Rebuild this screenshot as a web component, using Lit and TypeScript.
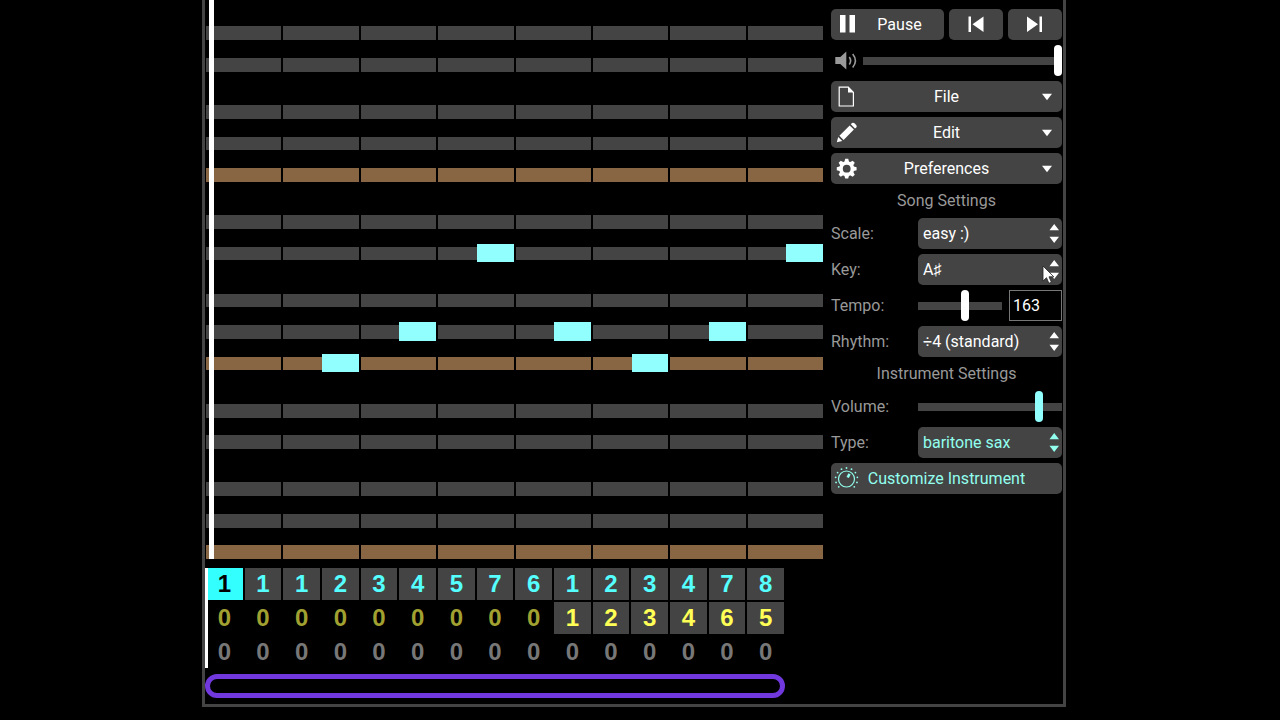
import { LitElement, html, css, svg } from "lit";
import { customElement, property } from "lit/decorators.js";
import { classMap } from "lit/directives/class-map.js";

const SEMITONES = 36;
const BEATS = 8;
const SCALE_STEPS = [0, 2, 4, 7, 9];

// Beats with a sounding off-beat note, keyed by semitone above the lowest row.
const NOTES: Record<number, number[]> = { 12: [1, 5], 14: [2, 4, 6], 19: [3, 7] };

const CHANNELS = [
  { name: "cyan", bars: [1, 1, 1, 2, 3, 4, 5, 7, 6, 1, 2, 3, 4, 7, 8] },
  { name: "yellow", bars: [0, 0, 0, 0, 0, 0, 0, 0, 0, 1, 2, 3, 4, 6, 5] },
  { name: "drum", bars: [0, 0, 0, 0, 0, 0, 0, 0, 0, 0, 0, 0, 0, 0, 0] },
];

@customElement("piano-roll")
export class PianoRoll extends LitElement {
  static styles = css`
    :host {
      display: flex;
      flex-direction: column;
      justify-content: flex-end;
      position: relative;
      height: 559px;
      overflow: hidden;
    }
    .rows {
      display: grid;
      grid-template-rows: repeat(36, 1fr);
      row-gap: 2px;
      height: 564px;
      flex: none;
      box-sizing: border-box;
      padding-left: 1px;
    }
    .row {
      display: grid;
      grid-template-columns: repeat(8, 1fr);
      column-gap: 2px;
      min-height: 0;
    }
    .beat {
      position: relative;
      background: #444;
    }
    .tonic .beat {
      background: #886644;
    }
    .note {
      position: absolute;
      top: -3px;
      bottom: -2px;
      left: 50%;
      right: 0;
      margin-left: 1px;
      background: #92ffff;
    }
    .playhead {
      position: absolute;
      top: 0;
      bottom: 0;
      left: 4px;
      width: 5px;
      background: #fff;
    }
  `;

  render() {
    const pitches = Array.from({ length: SEMITONES }, (_, i) => SEMITONES - 1 - i);
    const beats = Array.from({ length: BEATS }, (_, i) => i);
    return html`
      <div class="rows">
        ${pitches.map((p) =>
          SCALE_STEPS.includes(p % 12)
            ? html`<div class=${classMap({ row: true, tonic: p % 12 === 0 })}>
                ${beats.map(
                  (b) => html`<div class="beat">
                    ${NOTES[p]?.includes(b) ? html`<div class="note"></div>` : ""}
                  </div>`
                )}
              </div>`
            : html`<div class="row"></div>`
        )}
      </div>
      <div class="playhead"></div>
    `;
  }
}

@customElement("track-editor")
export class TrackEditor extends LitElement {
  static styles = css`
    :host {
      display: block;
      position: relative;
    }
    .tracks {
      display: grid;
      row-gap: 2px;
      padding: 0 39px 0 1px;
    }
    .track {
      display: grid;
      grid-template-columns: repeat(15, 1fr);
      column-gap: 2px;
    }
    .bar {
      height: 32px;
      padding: 0;
      border: 0;
      background: none;
      font: bold 24px/32px "Liberation Sans", Arial, sans-serif;
      text-align: center;
    }
    .filled {
      background: #444;
    }
    .cyan {
      color: #55ffff;
    }
    .yellow {
      color: #a1a131;
    }
    .yellow.filled {
      color: #ffff55;
    }
    .drum {
      color: #777;
    }
    .bar.selected {
      background: #33ffff;
      color: #000;
    }
    .playhead {
      position: absolute;
      top: 0;
      left: 0;
      width: 3px;
      height: 100px;
      background: #fff;
    }
    .loop {
      box-sizing: border-box;
      height: 24px;
      margin: 6px 38px 0 0;
      border: 5px solid #7139dd;
      border-radius: 12px;
    }
  `;

  render() {
    return html`
      <div class="tracks">
        ${CHANNELS.map(
          (c, row) => html`<div class="track">
            ${c.bars.map(
              (n, i) => html`<button
                class=${classMap({
                  bar: true,
                  [c.name]: true,
                  filled: n > 0,
                  selected: row === 0 && i === 0,
                })}
              >${n}</button>`
            )}
          </div>`
        )}
      </div>
      <div class="playhead"></div>
      <div class="loop"></div>
    `;
  }
}

const gearTeeth = Array.from({ length: 8 }, (_, i) => i * 45);
const dialDots = Array.from({ length: 11 }, (_, i) => {
  const a = ((i * 27 - 225) * Math.PI) / 180;
  return [15.5 + 11 * Math.cos(a), 16 + 11 * Math.sin(a)];
});

const ICONS = {
  pause: svg`<path d="M9 6h5.500v17.500H9zM18.500 6h5.500v17.500h-5.500z"/>`,
  prev: svg`<path d="M8.500 7.500h2.500v15.500h-2.500zM23.500 7.500v15.500L12.500 15.200z"/>`,
  next: svg`<path d="M20.500 7.500h2.500v15.500h-2.500zM8 7.500v15.500L19 15.200z"/>`,
  speaker: svg`<path d="M4.300 12h5l6-5.500v18l-6-5.500h-5z"/>
    <path d="M18.300 12q2.600 3.700 0 7.500M21.700 9q5.400 6.700 0 13.500" fill="none" stroke="currentColor" stroke-width="1.600"/>`,
  file: svg`<path d="M8.200 6.200h9l5.200 5.200v13.600H8.200z" fill="none" stroke="currentColor" stroke-width="1.200"/>
    <path d="M17 5.600l6 6h-6z"/>`,
  edit: svg`<path d="M5.800 25.300l1.400-5.400 4.100 4.100zM8.400 18.700L18.700 8.400l4.200 4.200L12.600 22.900zM19.800 7.300l1.200-1.200q1.200-.9 2.500.2l1.700 1.700q1.100 1.300.1 2.500L24 11.500z"/>`,
  gear: svg`<circle cx="15.700" cy="15.700" r="5.700" fill="none" stroke="currentColor" stroke-width="3.600"/>
    ${gearTeeth.map((a) => svg`<path transform="rotate(${a} 15.700 15.700)" d="M13.200 9.500l1-3.700h3l1 3.700z"/>`)}`,
  dial: svg`<circle cx="15.500" cy="16" r="8" fill="none" stroke="currentColor" stroke-width="1.200"/>
    <path d="M16.700 14.500l1.800-3.600" stroke="currentColor" stroke-width="2.600"/>
    ${dialDots.map(([x, y]) => svg`<circle cx=${x} cy=${y} r="0.900"/>`)}`,
};

function icon(name: keyof typeof ICONS) {
  return html`<svg class="icon" viewBox="0 0 32 31" fill="currentColor" aria-hidden="true">${ICONS[name]}</svg>`;
}

const caret = html`<svg class="arrow" viewBox="0 0 32 31" fill="currentColor" aria-hidden="true"><path d="M12 12.700h10L17 19.300z"/></svg>`;
const stepper = html`<svg class="arrow" viewBox="0 0 32 31" fill="currentColor" aria-hidden="true"><path d="M19.500 12.200h9.500L24.200 6zM19.500 18.700h9.500L24.200 25z"/></svg>`;

@customElement("song-settings")
export class SongSettings extends LitElement {
  @property({ type: Number }) tempo = 163;

  static styles = css`
    :host {
      display: flex;
      flex-direction: column;
      gap: 5px;
      padding: 9px 1px 0 0;
      color: #999;
      font: 16px/24px Roboto, sans-serif;
    }
    button,
    select,
    input {
      box-sizing: border-box;
      min-width: 0;
      width: 100%;
      height: 31px;
      margin: 0;
      border: 0;
      font: inherit;
    }
    button,
    select {
      appearance: none;
      padding: 0;
      border-radius: 5px;
      background: #444;
      color: #fff;
    }
    .icon,
    .arrow {
      width: 32px;
      height: 31px;
      flex: none;
      pointer-events: none;
    }
    .transport {
      display: grid;
      grid-template-columns: 1fr 54px 54px;
      gap: 5px;
    }
    .transport button {
      display: flex;
      align-items: center;
      justify-content: center;
    }
    .transport .play {
      justify-content: flex-start;
    }
    .play span {
      flex: 1;
      padding-right: 8px;
    }
    .master {
      display: grid;
      grid-template-columns: 32px 1fr;
    }
    .field {
      display: grid;
      grid-template-columns: 32px 1fr 32px;
      position: relative;
      color: #fff;
    }
    .field > * {
      grid-row: 1;
    }
    .field select {
      grid-column: 1 / -1;
      padding: 0 30px 0 5px;
    }
    .field .icon {
      grid-column: 1;
      z-index: 1;
    }
    .field .arrow {
      grid-column: 3;
      z-index: 1;
    }
    .menu select {
      padding: 0;
      text-align: center;
      text-align-last: center;
    }
    .heading {
      margin: 0;
      font: inherit;
      text-align: center;
    }
    .setting {
      display: grid;
      grid-template-columns: 87px 1fr;
      align-items: center;
    }
    .instrument,
    .instrument select,
    .customize {
      color: #92ffee;
    }
    .tempo {
      display: grid;
      grid-template-columns: 1fr 53px;
      gap: 7px;
    }
    .number {
      padding: 0 3px;
      border: 1px solid #777;
      background: #000;
      color: #fff;
    }
    .range {
      appearance: none;
      background: none;
      color: #fff;
    }
    .range::-webkit-slider-runnable-track {
      height: 8px;
      background: #444;
    }
    .range::-webkit-slider-thumb {
      appearance: none;
      width: 8px;
      height: 31px;
      margin-top: -12px;
      border-radius: 4px;
      background: currentColor;
    }
    .range.instrument {
      color: #92ffff;
    }
    .customize {
      display: flex;
      align-items: center;
    }
    .customize span {
      flex: 1;
      padding-right: 32px;
    }
    .pointer {
      position: absolute;
      top: 11px;
      right: 6px;
      width: 14px;
      height: 20px;
      z-index: 2;
    }
  `;

  private menu(name: keyof typeof ICONS, label: string) {
    return html`<div class="field menu">
      <select aria-label=${label}><option>${label}</option></select>
      ${icon(name)}${caret}
    </div>`;
  }

  private choice(id: string, label: string, value: string, extra = "", pointer = false) {
    return html`<div class="setting">
      <label for=${id}>${label}</label>
      <div class="field ${extra}">
        <select id=${id}><option>${value}</option></select>
        ${stepper}
        ${pointer
          ? html`<svg class="pointer" viewBox="0 0 14 20" aria-hidden="true">
              <path d="M1 1v15l3.500-3.300 2.400 5.600 2.500-1.100-2.400-5.400h4.800z" fill="#fff" stroke="#222" stroke-width="0.800"/>
            </svg>`
          : ""}
      </div>
    </div>`;
  }

  render() {
    return html`
      <div class="transport">
        <button class="play">${icon("pause")}<span>Pause</span></button>
        <button aria-label="Previous bar">${icon("prev")}</button>
        <button aria-label="Next bar">${icon("next")}</button>
      </div>
      <div class="master">
        ${icon("speaker")}
        <input class="range" type="range" min="0" max="100" .value=${"100"} aria-label="Main volume" />
      </div>
      ${this.menu("file", "File")} ${this.menu("edit", "Edit")} ${this.menu("gear", "Preferences")}
      <h2 class="heading">Song Settings</h2>
      ${this.choice("scale", "Scale:", "easy :)")}
      ${this.choice("key", "Key:", "A♯", "", true)}
      <div class="setting">
        <label for="tempo">Tempo:</label>
        <div class="tempo">
          <input class="range" type="range" min="30" max="264" .value=${String(this.tempo)} aria-label="Tempo slider" />
          <input class="number" id="tempo" type="text" inputmode="numeric" .value=${String(this.tempo)} />
        </div>
      </div>
      ${this.choice("rhythm", "Rhythm:", "÷4 (standard)")}
      <h2 class="heading">Instrument Settings</h2>
      <div class="setting">
        <label for="volume">Volume:</label>
        <input class="range instrument" id="volume" type="range" min="0" max="100" .value=${"86"} />
      </div>
      ${this.choice("type", "Type:", "baritone sax", "instrument")}
      <button class="customize">${icon("dial")}<span>Customize Instrument</span></button>
    `;
  }
}

@customElement("app-root")
export class AppRoot extends LitElement {
  static styles = css`
    :host {
      display: block;
      box-sizing: border-box;
      min-height: 100vh;
      padding-right: 12px;
      background: #000;
    }
    .editor {
      display: grid;
      grid-template-columns: minmax(0, 1fr) 232px;
      column-gap: 8px;
      box-sizing: border-box;
      max-width: 864px;
      margin: 0 auto;
      padding-bottom: 6px;
      border: 3px solid #444;
      border-top: 0;
    }
    .song {
      display: grid;
      row-gap: 9px;
    }
  `;

  render() {
    return html`
      <main class="editor">
        <section class="song">
          <piano-roll></piano-roll>
          <track-editor></track-editor>
        </section>
        <song-settings></song-settings>
      </main>
    `;
  }
}
